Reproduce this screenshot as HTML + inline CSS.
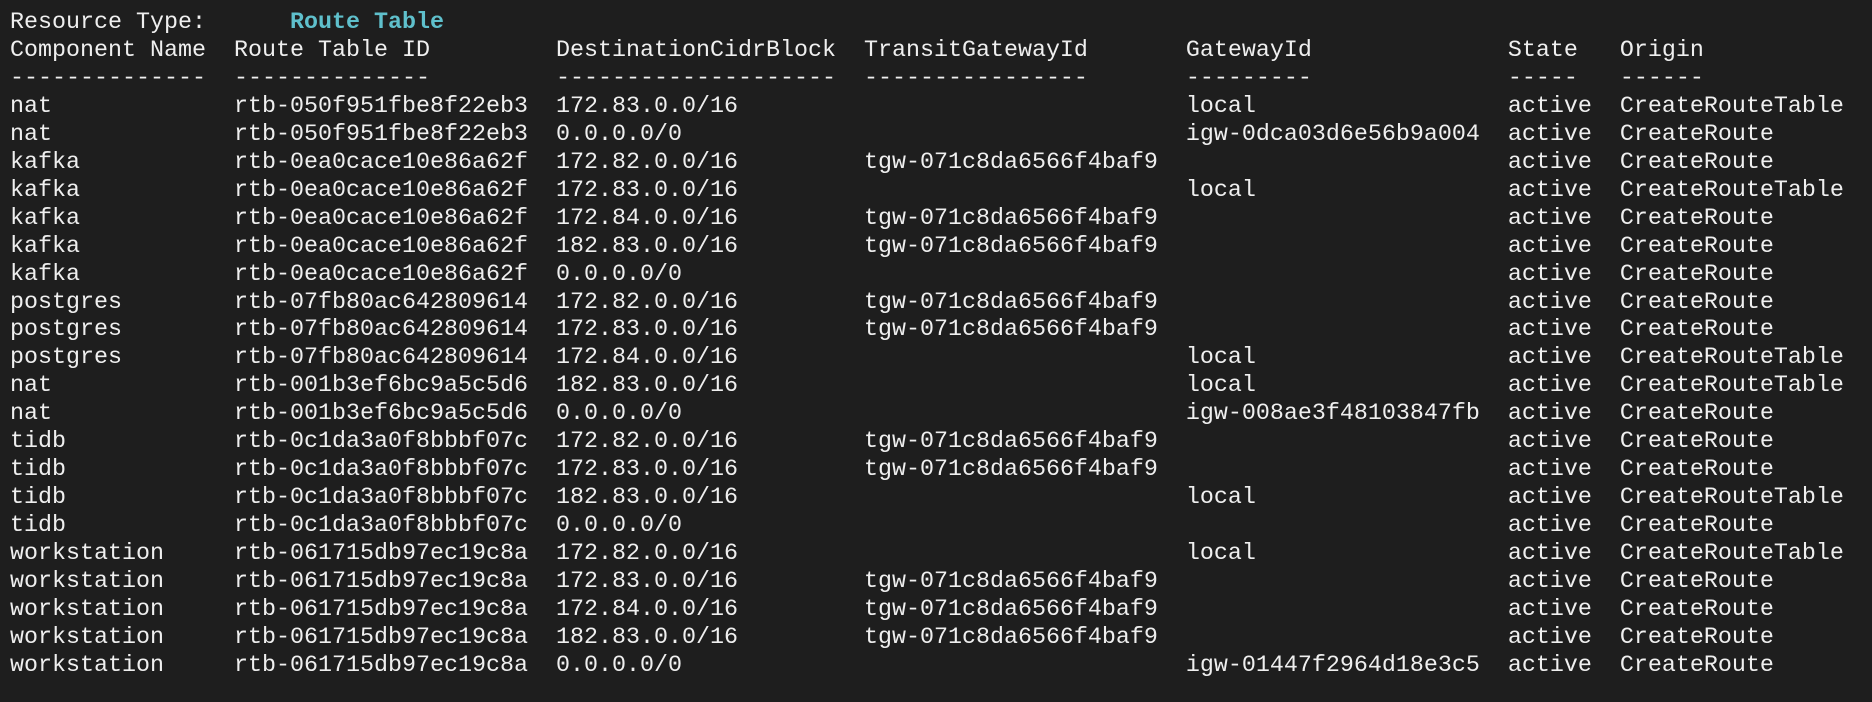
<!DOCTYPE html>
<html><head><meta charset="utf-8"><style>
html,body{margin:0;padding:0;background:#1e1e1e;width:1872px;height:702px;overflow:hidden}
pre{margin:0;position:absolute;left:10px;top:10px;font-family:"Liberation Mono",monospace;font-size:23.33px;line-height:27.95px;color:#efefef;white-space:pre}
b{color:#5fc0cc;font-weight:bold}
</style></head><body><pre>Resource Type:      <b>Route Table</b>
Component Name  Route Table ID         DestinationCidrBlock  TransitGatewayId       GatewayId              State   Origin
--------------  --------------         --------------------  ----------------       ---------              -----   ------
nat             rtb-050f951fbe8f22eb3  172.83.0.0/16                                local                  active  CreateRouteTable
nat             rtb-050f951fbe8f22eb3  0.0.0.0/0                                    igw-0dca03d6e56b9a004  active  CreateRoute
kafka           rtb-0ea0cace10e86a62f  172.82.0.0/16         tgw-071c8da6566f4baf9                         active  CreateRoute
kafka           rtb-0ea0cace10e86a62f  172.83.0.0/16                                local                  active  CreateRouteTable
kafka           rtb-0ea0cace10e86a62f  172.84.0.0/16         tgw-071c8da6566f4baf9                         active  CreateRoute
kafka           rtb-0ea0cace10e86a62f  182.83.0.0/16         tgw-071c8da6566f4baf9                         active  CreateRoute
kafka           rtb-0ea0cace10e86a62f  0.0.0.0/0                                                           active  CreateRoute
postgres        rtb-07fb80ac642809614  172.82.0.0/16         tgw-071c8da6566f4baf9                         active  CreateRoute
postgres        rtb-07fb80ac642809614  172.83.0.0/16         tgw-071c8da6566f4baf9                         active  CreateRoute
postgres        rtb-07fb80ac642809614  172.84.0.0/16                                local                  active  CreateRouteTable
nat             rtb-001b3ef6bc9a5c5d6  182.83.0.0/16                                local                  active  CreateRouteTable
nat             rtb-001b3ef6bc9a5c5d6  0.0.0.0/0                                    igw-008ae3f48103847fb  active  CreateRoute
tidb            rtb-0c1da3a0f8bbbf07c  172.82.0.0/16         tgw-071c8da6566f4baf9                         active  CreateRoute
tidb            rtb-0c1da3a0f8bbbf07c  172.83.0.0/16         tgw-071c8da6566f4baf9                         active  CreateRoute
tidb            rtb-0c1da3a0f8bbbf07c  182.83.0.0/16                                local                  active  CreateRouteTable
tidb            rtb-0c1da3a0f8bbbf07c  0.0.0.0/0                                                           active  CreateRoute
workstation     rtb-061715db97ec19c8a  172.82.0.0/16                                local                  active  CreateRouteTable
workstation     rtb-061715db97ec19c8a  172.83.0.0/16         tgw-071c8da6566f4baf9                         active  CreateRoute
workstation     rtb-061715db97ec19c8a  172.84.0.0/16         tgw-071c8da6566f4baf9                         active  CreateRoute
workstation     rtb-061715db97ec19c8a  182.83.0.0/16         tgw-071c8da6566f4baf9                         active  CreateRoute
workstation     rtb-061715db97ec19c8a  0.0.0.0/0                                    igw-01447f2964d18e3c5  active  CreateRoute</pre></body></html>
